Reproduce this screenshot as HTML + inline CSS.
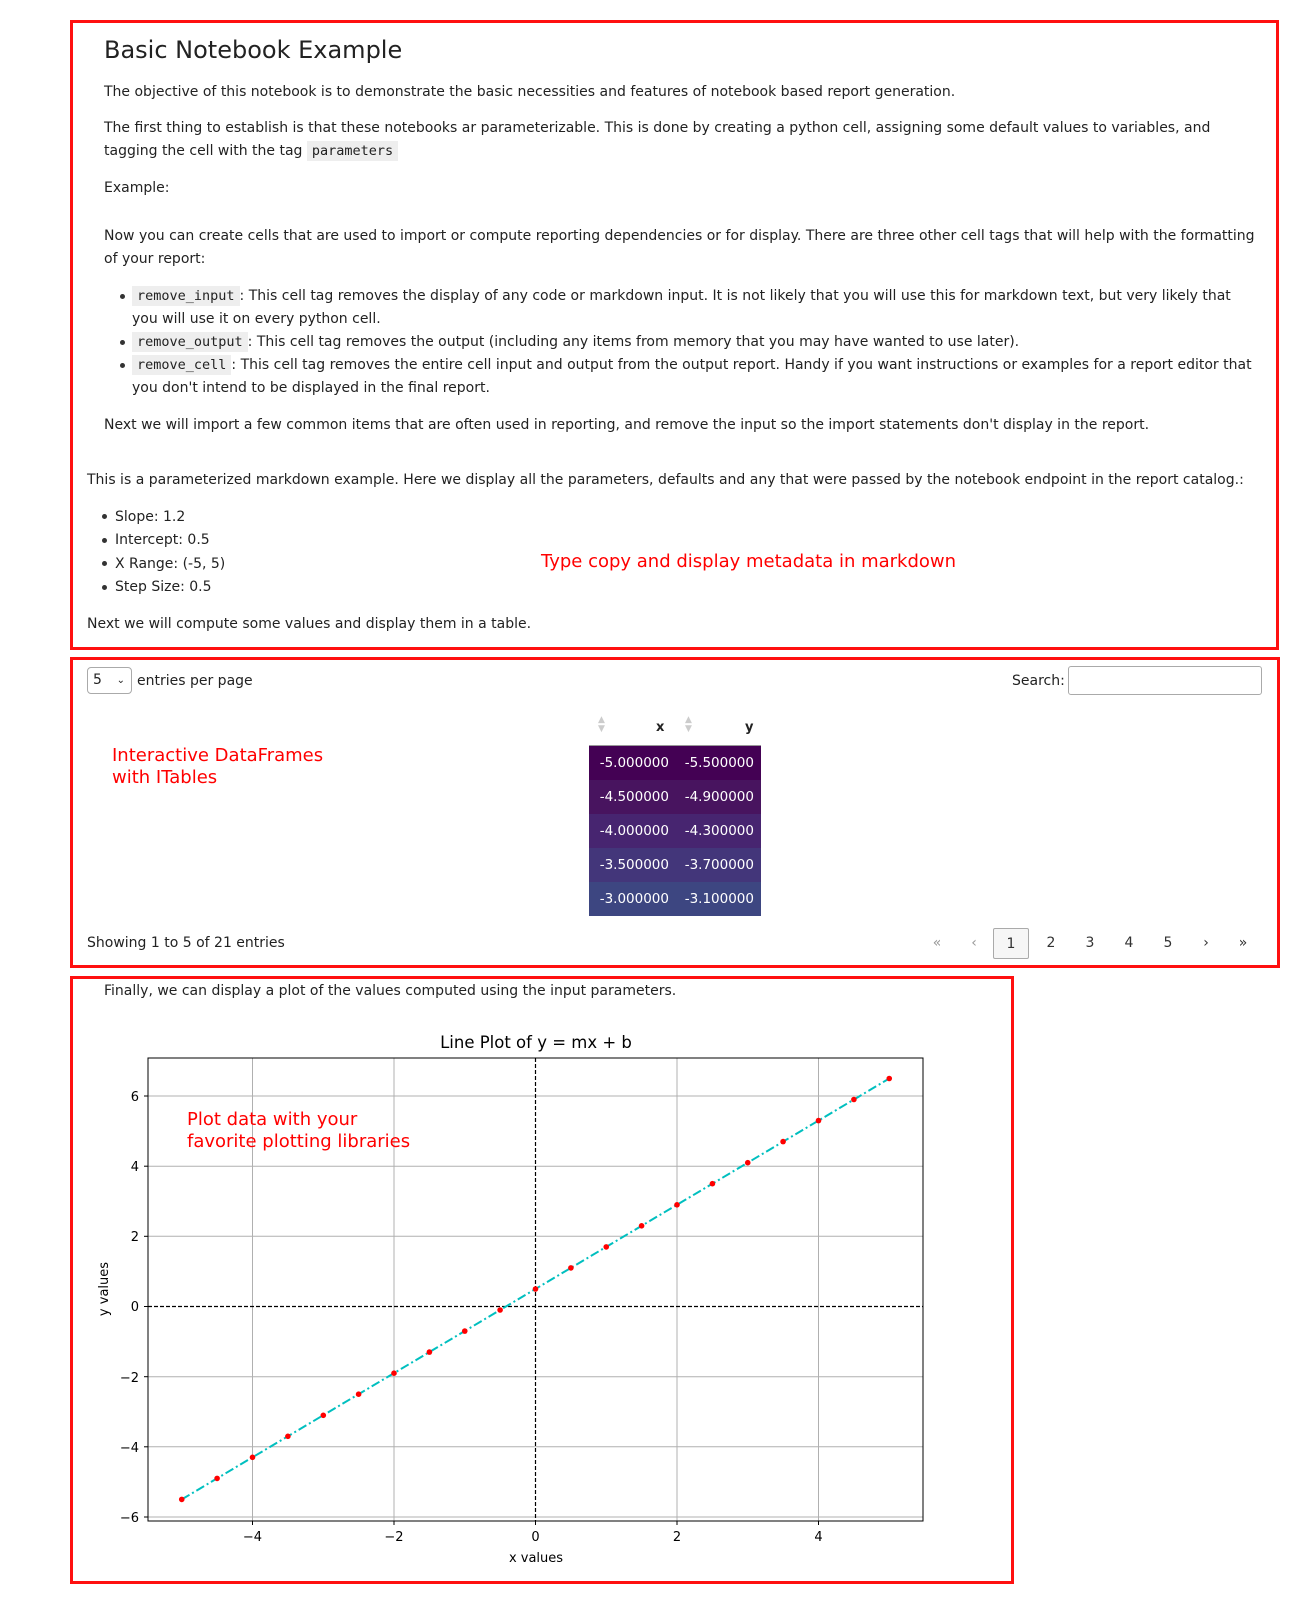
<!DOCTYPE html>
<html><head><meta charset="utf-8">
<style>
*{margin:0;padding:0;box-sizing:border-box}
body{width:1305px;height:1599px;background:#fff;position:relative;font-family:"DejaVu Sans","Liberation Sans",sans-serif;color:#222;font-size:14px;overflow:hidden}
.box{position:absolute;border:3px solid #ff1010}
.t{position:absolute;white-space:nowrap;line-height:23px}
code{font-family:"DejaVu Sans Mono","Liberation Mono",monospace;background:#eee;padding:2px 5px;font-size:13.5px}
.red{color:#ff0000;font-size:18px;line-height:22px}
.dot{position:absolute;width:5px;height:5px;border-radius:50%;background:#333}
.pg{position:absolute;top:930px;height:31px;line-height:31px;width:36px;text-align:center;font-size:14px;color:#333}
.pg.g{color:#999}
.row{position:absolute;left:590px;width:172px;height:34px;color:#fff;font-size:13.5px;line-height:34px}
.row span{position:absolute;width:80px;text-align:right}
.row span:first-child{left:0}
.row span:last-child{left:85px}
.w{position:absolute;left:0;width:1305px;height:1599px}
</style></head><body>
<div class="box" style="left:70px;top:20px;width:1209px;height:630px"></div>
<div class="box" style="left:70px;top:657px;width:1210px;height:311px"></div>
<div class="box" style="left:70px;top:976px;width:944px;height:608px"></div>

<div class="t" style="left:104px;top:34px;font-size:24px;line-height:32px;color:#222">Basic Notebook Example</div>
<div class="t" style="left:104px;top:81px">The objective of this notebook is to demonstrate the basic necessities and features of notebook based report generation.</div>
<div class="t" style="left:104px;top:117px">The first thing to establish is that these notebooks ar parameterizable. This is done by creating a python cell, assigning some default values to variables, and<br>tagging the cell with the tag <code>parameters</code></div>
<div class="t" style="left:104px;top:177px">Example:</div>
<div class="t" style="left:104px;top:225px">Now you can create cells that are used to import or compute reporting dependencies or for display. There are three other cell tags that will help with the formatting<br>of your report:</div>
<div class="dot" style="left:120px;top:294px"></div>
<div class="t" style="left:132px;top:285px"><code>remove_input</code>: This cell tag removes the display of any code or markdown input. It is not likely that you will use this for markdown text, but very likely that<br>you will use it on every python cell.</div>
<div class="dot" style="left:120px;top:340px"></div>
<div class="t" style="left:132px;top:331px"><code>remove_output</code>: This cell tag removes the output (including any items from memory that you may have wanted to use later).</div>
<div class="dot" style="left:120px;top:363px"></div>
<div class="t" style="left:132px;top:354px"><code>remove_cell</code>: This cell tag removes the entire cell input and output from the output report. Handy if you want instructions or examples for a report editor that<br>you don't intend to be displayed in the final report.</div>
<div class="t" style="left:104px;top:414px">Next we will import a few common items that are often used in reporting, and remove the input so the import statements don't display in the report.</div>
<div class="t" style="left:87px;top:469px">This is a parameterized markdown example. Here we display all the parameters, defaults and any that were passed by the notebook endpoint in the report catalog.:</div>
<div class="dot" style="left:102px;top:514px"></div><div class="t" style="left:115px;top:506px">Slope: 1.2</div>
<div class="dot" style="left:102px;top:538px"></div><div class="t" style="left:115px;top:529px">Intercept: 0.5</div>
<div class="dot" style="left:102px;top:561px"></div><div class="t" style="left:115px;top:553px">X Range: (-5, 5)</div>
<div class="dot" style="left:102px;top:585px"></div><div class="t" style="left:115px;top:576px">Step Size: 0.5</div>
<div class="t red" style="left:541px;top:551px">Type copy and display metadata in markdown</div>
<div class="t" style="left:87px;top:613px">Next we will compute some values and display them in a table.</div>

<div class="w" style="top:-2px">
<div style="position:absolute;left:87px;top:669px;width:45px;height:27px;border:1px solid #aaa;border-radius:4px;font-size:14px;line-height:25px;padding-left:5px">5<span style="position:absolute;right:6px;top:0;font-size:10px">&#8964;</span></div>
<div class="t" style="left:137px;top:672px">entries per page</div>
<div class="t" style="left:1012px;top:672px">Search:</div>
<div style="position:absolute;left:1068px;top:668px;width:194px;height:29px;border:1px solid #aaa;border-radius:3px"></div>
<div class="t red" style="left:112px;top:747px">Interactive DataFrames<br>with ITables</div>
<div class="t" style="left:598px;top:718px;font-size:9px;color:#ccc;line-height:9px">&#9650;<br>&#9660;</div>
<div class="t" style="left:685px;top:718px;font-size:9px;color:#ccc;line-height:9px">&#9650;<br>&#9660;</div>
<div class="t" style="left:656px;top:718px;font-weight:bold;font-size:13px">x</div>
<div class="t" style="left:745px;top:718px;font-weight:bold;font-size:13px">y</div>
<div style="position:absolute;left:589px;top:747px;width:172px;height:1px;background:#999"></div>
<div class="row" style="top:748px;left:589px;background:#440154"><span>-5.000000</span><span>-5.500000</span></div>
<div class="row" style="top:782px;left:589px;background:#48145f"><span>-4.500000</span><span>-4.900000</span></div>
<div class="row" style="top:816px;left:589px;background:#472570"><span>-4.000000</span><span>-4.300000</span></div>
<div class="row" style="top:850px;left:589px;background:#43367a"><span>-3.500000</span><span>-3.700000</span></div>
<div class="row" style="top:884px;left:589px;background:#3d4681"><span>-3.000000</span><span>-3.100000</span></div>
<div class="t" style="left:87px;top:934px">Showing 1 to 5 of 21 entries</div>
<div class="pg g" style="left:919px">&laquo;</div>
<div class="pg g" style="left:956px">&lsaquo;</div>
<div class="pg" style="left:993px;border:1px solid #aaa;border-radius:2px;background:#f6f6f6">1</div>
<div class="pg" style="left:1033px">2</div>
<div class="pg" style="left:1072px">3</div>
<div class="pg" style="left:1111px">4</div>
<div class="pg" style="left:1150px">5</div>
<div class="pg" style="left:1188px">&rsaquo;</div>
<div class="pg" style="left:1225px">&raquo;</div>
</div>

<div class="w" style="top:-2px">
<div class="t" style="left:104px;top:982px">Finally, we can display a plot of the values computed using the input parameters.</div>
<svg style="position:absolute;left:0;top:0" width="1305" height="1599" font-family="DejaVu Sans, sans-serif">
<g stroke="#b0b0b0" stroke-width="1">
<line x1="252.5" y1="1060" x2="252.5" y2="1523"/><line x1="394" y1="1060" x2="394" y2="1523"/><line x1="677" y1="1060" x2="677" y2="1523"/><line x1="818.5" y1="1060" x2="818.5" y2="1523"/>
<line x1="148" y1="1098" x2="923" y2="1098"/><line x1="148" y1="1168.2" x2="923" y2="1168.2"/><line x1="148" y1="1238.3" x2="923" y2="1238.3"/><line x1="148" y1="1378.7" x2="923" y2="1378.7"/><line x1="148" y1="1448.8" x2="923" y2="1448.8"/><line x1="148" y1="1519" x2="923" y2="1519"/>
</g>
<g stroke="#000" stroke-width="1.2" stroke-dasharray="4,2">
<line x1="535.5" y1="1060" x2="535.5" y2="1523"/><line x1="148" y1="1308.5" x2="923" y2="1308.5"/>
</g>
<line x1="181.75" y1="1501.4" x2="889.25" y2="1080.5" stroke="#00bfbf" stroke-width="2" stroke-dasharray="9,3,2,3"/>
<g fill="#ff0000">
<circle cx="181.75" cy="1501.4" r="2.8"/><circle cx="217.1" cy="1480.4" r="2.8"/><circle cx="252.5" cy="1459.3" r="2.8"/><circle cx="287.9" cy="1438.3" r="2.8"/><circle cx="323.3" cy="1417.3" r="2.8"/><circle cx="358.6" cy="1396.2" r="2.8"/><circle cx="394" cy="1375.2" r="2.8"/><circle cx="429.4" cy="1354.1" r="2.8"/><circle cx="464.75" cy="1333.1" r="2.8"/><circle cx="500.1" cy="1312" r="2.8"/><circle cx="535.5" cy="1291" r="2.8"/><circle cx="570.9" cy="1269.9" r="2.8"/><circle cx="606.25" cy="1248.9" r="2.8"/><circle cx="641.6" cy="1227.8" r="2.8"/><circle cx="677" cy="1206.8" r="2.8"/><circle cx="712.4" cy="1185.7" r="2.8"/><circle cx="747.75" cy="1164.7" r="2.8"/><circle cx="783.1" cy="1143.6" r="2.8"/><circle cx="818.5" cy="1122.6" r="2.8"/><circle cx="853.9" cy="1101.5" r="2.8"/><circle cx="889.25" cy="1080.5" r="2.8"/>
</g>
<rect x="148" y="1060" width="775" height="463" fill="none" stroke="#000" stroke-width="1"/>
<g stroke="#000" stroke-width="1">
<line x1="252.5" y1="1523" x2="252.5" y2="1527"/><line x1="394" y1="1523" x2="394" y2="1527"/><line x1="535.5" y1="1523" x2="535.5" y2="1527"/><line x1="677" y1="1523" x2="677" y2="1527"/><line x1="818.5" y1="1523" x2="818.5" y2="1527"/>
<line x1="144" y1="1098" x2="148" y2="1098"/><line x1="144" y1="1168.2" x2="148" y2="1168.2"/><line x1="144" y1="1238.3" x2="148" y2="1238.3"/><line x1="144" y1="1308.5" x2="148" y2="1308.5"/><line x1="144" y1="1378.7" x2="148" y2="1378.7"/><line x1="144" y1="1448.8" x2="148" y2="1448.8"/><line x1="144" y1="1519" x2="148" y2="1519"/>
</g>
<g font-size="13" fill="#000" text-anchor="middle">
<text x="252.5" y="1543">&#8722;4</text><text x="394" y="1543">&#8722;2</text><text x="535.5" y="1543">0</text><text x="677" y="1543">2</text><text x="818.5" y="1543">4</text>
<text x="536" y="1564">x values</text>
<text x="536" y="1050" font-size="16.5">Line Plot of y = mx + b</text>
</g>
<g font-size="13" fill="#000" text-anchor="end">
<text x="139" y="1103">6</text><text x="139" y="1173">4</text><text x="139" y="1243">2</text><text x="139" y="1313">0</text><text x="139" y="1384">&#8722;2</text><text x="139" y="1454">&#8722;4</text><text x="139" y="1524">&#8722;6</text>
</g>
<text x="108" y="1291" font-size="13" fill="#000" text-anchor="middle" transform="rotate(-90 108 1291)">y values</text>
<text x="187" y="1127" font-size="18" fill="#ff0000">Plot data with your</text>
<text x="187" y="1149" font-size="18" fill="#ff0000">favorite plotting libraries</text>
</svg>
</div>
</body></html>
